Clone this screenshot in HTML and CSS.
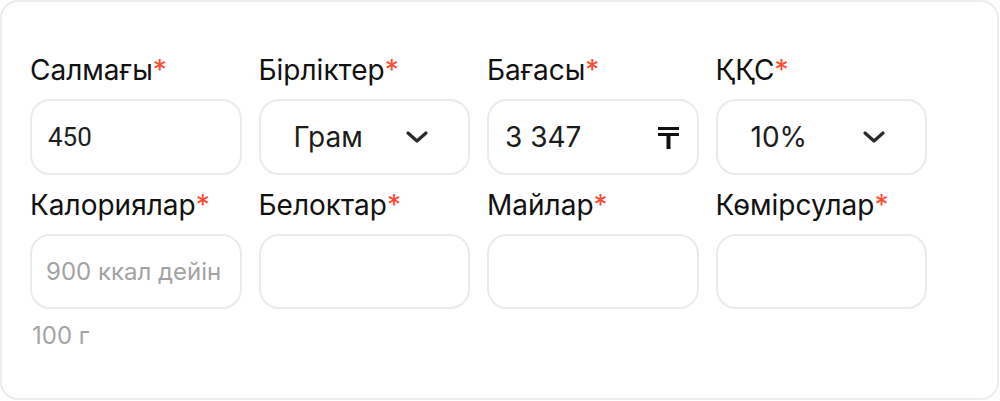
FILE: index.html
```html
<!DOCTYPE html>
<html lang="kk">
<head>
<meta charset="utf-8">
<link rel="stylesheet" href="styles.css">
</head>
<body>
<div class="card">
  <div class="grid">
    <div class="field">
      <div class="label">Салмағы<span class="req">*</span></div>
      <div class="control"><span class="value small">450</span></div>
    </div>
    <div class="field">
      <div class="label">Бірліктер<span class="req">*</span></div>
      <div class="control select"><span class="value">Грам</span>
        <svg class="chev" width="24" height="14" viewBox="0 0 24 14"><path d="M3 3 L12 11 L21 3" fill="none" stroke="#2a2a2a" stroke-width="3.2" stroke-linecap="round" stroke-linejoin="round"/></svg>
      </div>
    </div>
    <div class="field">
      <div class="label">Бағасы<span class="req">*</span></div>
      <div class="control"><span class="value">3 347</span>
        <svg class="tenge" width="21" height="22" viewBox="0 0 21 22"><rect x="0" y="0" width="21" height="3" fill="#111"/><rect x="0" y="6" width="21" height="3" fill="#111"/><rect x="8.5" y="6" width="4" height="16" fill="#111"/></svg>
      </div>
    </div>
    <div class="field">
      <div class="label">ҚҚС<span class="req">*</span></div>
      <div class="control select"><span class="value">10%</span>
        <svg class="chev" width="24" height="14" viewBox="0 0 24 14"><path d="M3 3 L12 11 L21 3" fill="none" stroke="#2a2a2a" stroke-width="3.2" stroke-linecap="round" stroke-linejoin="round"/></svg>
      </div>
    </div>

    <div class="field">
      <div class="label">Калориялар<span class="req">*</span></div>
      <div class="control row2"><span class="placeholder">900 ккал дейін</span></div>
      <div class="hint">100 г</div>
    </div>
    <div class="field">
      <div class="label">Белоктар<span class="req">*</span></div>
      <div class="control row2"></div>
    </div>
    <div class="field">
      <div class="label">Майлар<span class="req">*</span></div>
      <div class="control row2"></div>
    </div>
    <div class="field">
      <div class="label">Көмірсулар<span class="req">*</span></div>
      <div class="control row2"></div>
    </div>
  </div>
</div>
</body>
</html>
```

FILE: styles.css
```css
* { box-sizing: border-box; }
html, body { margin: 0; padding: 0; background: #fff; }
body { font-family: Inter, "Noto Sans", sans-serif; color: #111; }

.card {
  width: 999px;
  height: 400px;
  border: 2px solid #ededed;
  border-radius: 18px;
  padding: 51px 0 0 28px;
}

.grid {
  display: grid;
  grid-template-columns: repeat(4, 211.5px);
  column-gap: 17px;
  row-gap: 13px;
  align-items: start;
}

.field {
  display: flex;
  flex-direction: column;
}

.label {
  font-size: 28px;
  line-height: 34px;
  color: #111;
  white-space: nowrap;
}
.req { color: #ff4a33; }

.control {
  margin-top: 12px;
  height: 76px;
  border: 2px solid #ebebeb;
  border-radius: 20px;
  display: flex;
  align-items: center;
  padding: 0 18px 0 16px;
}
.control.row2 { height: 75px; }

.value {
  font-size: 28px;
  color: #1c1c1c;
  flex: 1;
  white-space: nowrap;
}
.value.small {
  font-family: Roboto, "Liberation Sans", sans-serif;
  font-size: 26px;
  color: #1e1e1e;
}

.select { padding: 0 39px 0 33px; }
.chev { flex: none; }
.tenge { flex: none; margin-top: 1px; }

.placeholder {
  font-size: 24px;
  color: #a3a3a3;
  white-space: nowrap;
  margin-left: -2px;
}

.hint {
  margin-top: 12px;
  font-size: 24px;
  line-height: 29px;
  color: #a5a5a5;
  padding-left: 2px;
}
```
